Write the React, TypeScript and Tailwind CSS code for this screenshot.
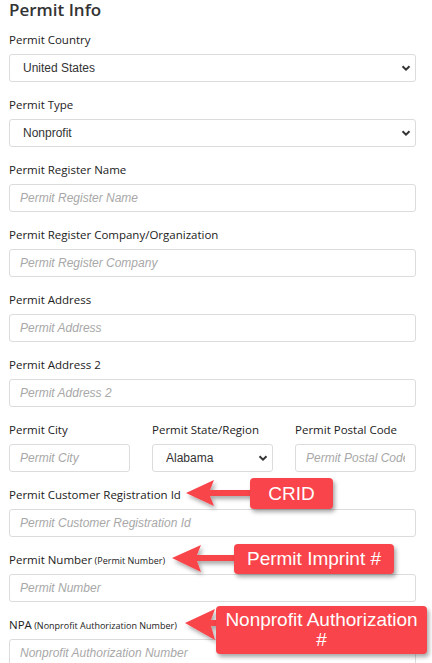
import React from "react";

const labelCls = "block h-[18px] leading-[18px] text-[11.5px] text-[#222] font-['Open_Sans',sans-serif] mb-[5px] whitespace-nowrap";
const boxCls =
  "block w-full h-[28px] rounded-[3px] border border-[#dcdcdc] bg-white px-[10px] text-[12px] font-['Liberation_Sans',Arial,sans-serif] text-[#333] placeholder:italic placeholder:text-[#a8a8a8] outline-none";

function Chevron() {
  return (
    <svg className="pointer-events-none absolute right-[5px] top-1/2 -translate-y-1/2" width="10" height="8" viewBox="0 0 10 8">
      <path d="M1.5 2.2 L5 5.6 L8.5 2.2" fill="none" stroke="#333" strokeWidth="2" />
    </svg>
  );
}

function Field({ label, sub, placeholder, last }: { label: string; sub?: string; placeholder: string; last?: boolean }) {
  return (
    <div className={last ? "" : "mb-[14px]"}>
      <label className={labelCls}>
        {label}
        {sub && <span className="text-[9px]"> ({sub})</span>}
      </label>
      <input className={boxCls} placeholder={placeholder} />
    </div>
  );
}

function Select({ label, value, last }: { label: string; value: string; last?: boolean }) {
  return (
    <div className={last ? "" : "mb-[14px]"}>
      <label className={labelCls}>{label}</label>
      <div className="relative">
        <select className={boxCls + " appearance-none pl-[13px]"} defaultValue={value}>
          <option>{value}</option>
        </select>
        <Chevron />
      </div>
    </div>
  );
}

function Callout({ x, y, w, h, children }: { x: number; y: number; w: number; h: number; children: React.ReactNode }) {
  return (
    <div
      className="absolute flex items-center justify-center rounded-[4px] bg-[#f8444a] text-center text-[19px] leading-[20px] text-white font-['Liberation_Sans',Arial,sans-serif] shadow-[2px_3px_4px_rgba(0,0,0,0.35)]"
      style={{ left: x, top: y, width: w, height: h }}
    >
      {children}
    </div>
  );
}

export default function App() {
  return (
    <div className="relative h-[663px] w-[432px] overflow-hidden bg-white">
      <div className="ml-[9px] w-[407px]">
        <h2 className="h-[31px] text-[17px] font-semibold leading-[20px] text-[#333] font-['Open_Sans',sans-serif]">Permit Info</h2>
        <Select label="Permit Country" value="United States" />
        <Select label="Permit Type" value="Nonprofit" />
        <Field label="Permit Register Name" placeholder="Permit Register Name" />
        <Field label="Permit Register Company/Organization" placeholder="Permit Register Company" />
        <Field label="Permit Address" placeholder="Permit Address" />
        <Field label="Permit Address 2" placeholder="Permit Address 2" />
        <div className="grid grid-cols-3 gap-x-[22px]">
          <Field label="Permit City" placeholder="Permit City" />
          <Select label="Permit State/Region" value="Alabama" />
          <Field label="Permit Postal Code" placeholder="Permit Postal Code" />
        </div>
        <Field label="Permit Customer Registration Id" placeholder="Permit Customer Registration Id" />
        <Field label="Permit Number" sub="Permit Number" placeholder="Permit Number" />
        <Field label="NPA" sub="Nonprofit Authorization Number" placeholder="Nonprofit Authorization Number" last />
      </div>

      <svg className="pointer-events-none absolute left-0 top-0" width="432" height="663">
        <defs>
          <filter id="sh" x="-20%" y="-30%" width="140%" height="180%">
            <feDropShadow dx="2" dy="3" stdDeviation="2" floodColor="#000" floodOpacity="0.35" />
          </filter>
        </defs>
        <g fill="#f8444a" filter="url(#sh)">
          <polygon points="186,493 214,480 210,490 254,490 254,496 210,496 214,506" />
          <polygon points="172,558 201,545 197,555 238,555 238,561 197,561 201,572" />
          <polygon points="185,623 215,609 211,620 220,620 220,626 211,626 215,640" />
        </g>
      </svg>

      <Callout x={250} y={478} w={83} h={31}>CRID</Callout>
      <Callout x={234} y={544} w={160} h={30}>Permit Imprint #</Callout>
      <Callout x={216} y={606} w={211} h={48}>
        Nonprofit Authorization
        <br />#
      </Callout>
    </div>
  );
}
